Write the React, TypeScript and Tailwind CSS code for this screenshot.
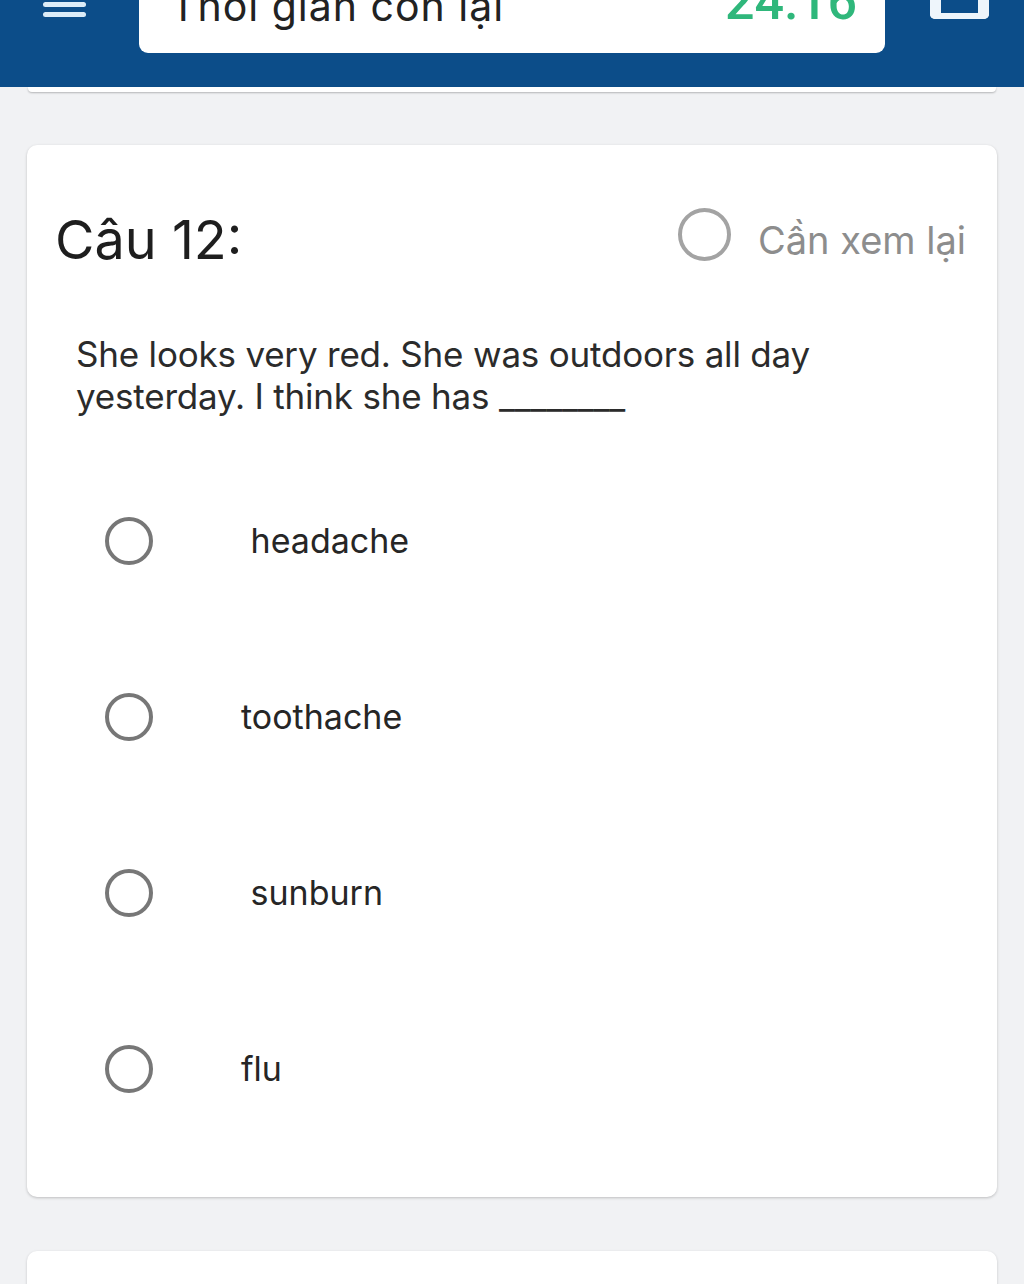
import React from "react";

const options = [" headache", "toothache", " sunburn", "flu"];

export default function App() {
  return (
    <div
      className="min-h-[1284px] bg-[#f1f2f4] overflow-hidden"
      style={{ fontFamily: "Inter, Roboto, 'Noto Sans', sans-serif" }}
    >
      {/* Header */}
      <div className="h-[87px] bg-[#0c4d89] overflow-hidden">
        <div className="flex items-start -mt-[27px]">
          <div className="ml-[43px] mt-[19px] flex flex-col gap-[5px] w-[43px]">
            <div className="h-[5px] bg-[#dcecf8] rounded-sm" />
            <div className="h-[5px] bg-[#dcecf8] rounded-sm" />
            <div className="h-[5px] bg-[#dcecf8] rounded-sm" />
          </div>
          <div className="ml-[53px] w-[746px] h-[80px] bg-white rounded-[9px] flex items-end justify-between pl-[31px] pr-[28px] pb-[26px]">
            <span className="text-[41px] leading-none text-[#222] tracking-[1px]">Thời gian còn lại</span>
            <span
              className="text-[52px] leading-none text-[#2fb77b] font-medium -mb-[1px]"
              style={{ fontFamily: "Roboto, Inter, sans-serif" }}
            >
              24:16
            </span>
          </div>
          <div className="ml-[45px] w-[59px] h-[46px] border-x-[11px] border-b-[6px] border-[#eef5fb] rounded-b-[5px]" />
        </div>
      </div>
      <div className="mx-[28px] h-[5px] bg-white rounded-b-[4px] shadow-[0_1px_2px_rgba(0,0,0,0.25)]" />

      {/* Card */}
      <div className="mx-[27px] mt-[53px] bg-white rounded-[10px] shadow-[0_1px_3px_rgba(0,0,0,0.22)] pt-[63px] pb-[104px]">
        <div className="flex items-center justify-between pl-[28px] pr-[31px] h-[53px]">
          <span className="text-[54px] leading-none text-[#1e1e1e] mt-[10px]">Câu 12:</span>
          <div className="flex items-center gap-[27px]">
            <div className="w-[53px] h-[53px] rounded-full border-[4px] border-[#a3a3a3]" />
            <span className="text-[38px] leading-none text-[#8d8d8d] mt-[10px]">Cần xem lại</span>
          </div>
        </div>
        <p className="mt-[72px] pl-[49px] pr-[40px] text-[35px] leading-[42px] text-[#2b2b2b] max-w-[840px] tracking-[-0.2px]">
          She looks very red. She was outdoors all day yesterday. I think she has ________
        </p>
        <div className="mt-[100px] pl-[78px] flex flex-col gap-[128px]">
          {options.map((o) => (
            <div key={o} className="flex items-center h-[48px]">
              <div className="w-[48px] h-[48px] rounded-full border-[4px] border-[#777]" />
              <span className="ml-[88px] text-[34px] leading-none text-[#262626] whitespace-pre">{o}</span>
            </div>
          ))}
        </div>
      </div>

      <div className="mx-[27px] mt-[54px] h-[200px] bg-white rounded-[10px] shadow-[0_1px_3px_rgba(0,0,0,0.18)]" />
    </div>
  );
}
